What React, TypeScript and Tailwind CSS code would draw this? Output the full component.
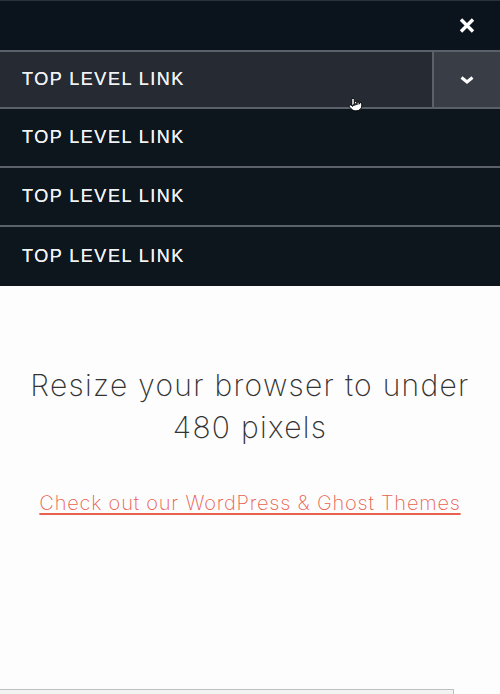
import { Pointer } from 'lucide-react';

// Liens du menu mobile
const LINKS = ['TOP LEVEL LINK', 'TOP LEVEL LINK', 'TOP LEVEL LINK', 'TOP LEVEL LINK'];

export default function App() {
  return (
    <div className="flex min-h-screen flex-col bg-[#fdfdfe] font-['Liberation_Sans',Arial,sans-serif]">
      <nav className="relative bg-[#0b141c]">
        <div className="flex h-[50px] items-center justify-end border-t border-[#2a323a] pr-[25px]">
          <svg width="16" height="15" viewBox="0 0 16 15" className="text-white">
            <path d="M2 1.5 L14 13.5 M14 1.5 L2 13.5" stroke="currentColor" strokeWidth="3.4" strokeLinecap="butt" />
          </svg>
        </div>

        <ul>
          {LINKS.map((label, i) => (
            <li
              key={i}
              className={
                i === 0
                  ? 'flex h-[59px] items-stretch border-y-2 border-[#5a6169] bg-[#262b33]'
                  : 'flex h-[59px] items-stretch border-b-2 border-[#5a6169] bg-[#0d151d] last:border-b-0'
              }
            >
              <a className="flex flex-1 items-center pl-[22px] text-[18px] tracking-[1.5px] text-[#f1f2f3] [text-shadow:0_0_0.5px_#f1f2f3]">
                {label}
              </a>
              {i === 0 && (
                <button className="flex w-[68px] items-center justify-center border-l-2 border-[#5a6169] bg-[#393e46]">
                  <svg width="14" height="8" viewBox="0 0 14 8" className="text-white">
                    <path d="M1.5 1.5 L7 6 L12.5 1.5" fill="none" stroke="currentColor" strokeWidth="3" />
                  </svg>
                </button>
              )}
            </li>
          ))}
        </ul>

        <Pointer
          size={15}
          fill="white"
          stroke="black"
          strokeWidth={1.5}
          className="absolute left-[348px] top-[97px]"
        />
      </nav>

      <main className="flex flex-1 flex-col items-center pt-[78px] text-center">
        <h1 className="w-[470px] font-['Inter',sans-serif] text-[30px] font-extralight leading-[42px] tracking-[1.3px] text-[#333]">
          Resize your browser to under 480 pixels
        </h1>
        <a className="mt-[41px] font-['Inter',sans-serif] text-[20px] font-extralight leading-[28px] tracking-[0.8px] text-[#e9604f] underline decoration-[1.5px] underline-offset-[3px]">
          Check out our WordPress &amp; Ghost Themes
        </a>
      </main>

      <div className="h-[5px] w-[454px] overflow-hidden border-r border-t border-[#bfbfbf] bg-[#f3f3f3]" />
    </div>
  );
}
